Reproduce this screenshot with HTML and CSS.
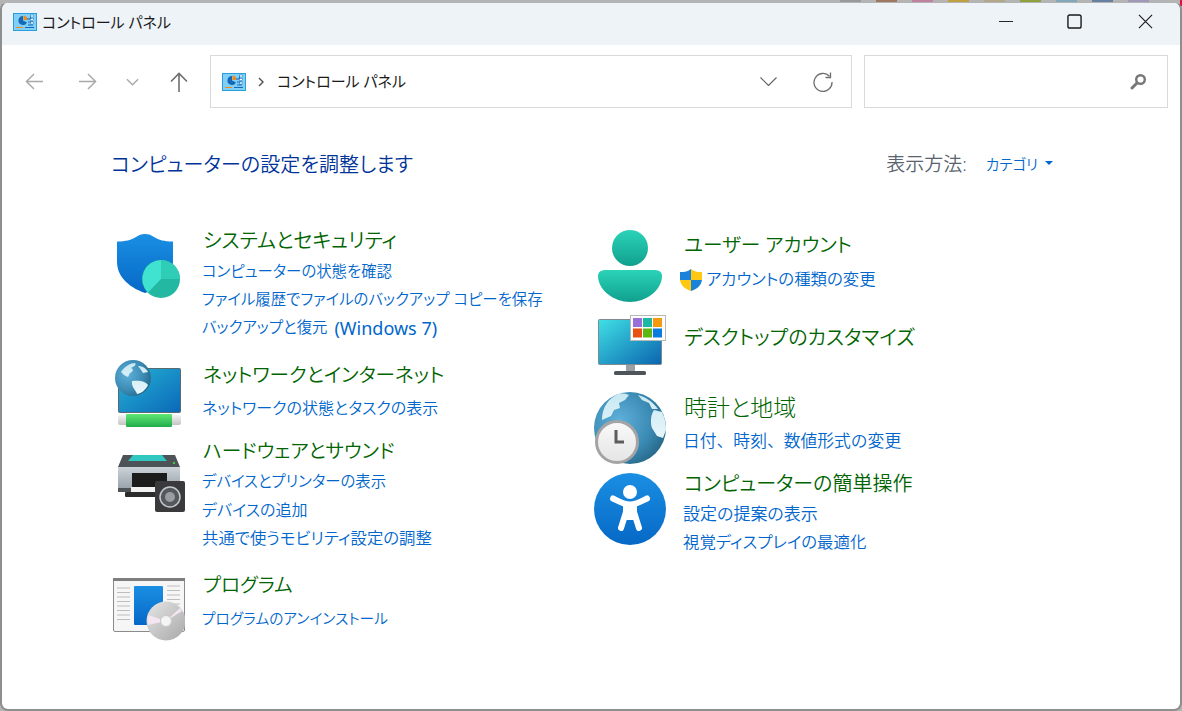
FILE: index.html
```html
<!DOCTYPE html>
<html lang="ja">
<head>
<meta charset="utf-8">
<title>コントロール パネル</title>
<link rel="stylesheet" href="styles.css">
</head>
<body>
<svg class="defs" width="0" height="0" aria-hidden="true">
  <defs>
    <linearGradient id="blue" x1="0" y1="0" x2="0" y2="1"><stop offset="0" stop-color="#1a8fe3"/><stop offset="1" stop-color="#0668c6"/></linearGradient>
    <linearGradient id="teal" x1="0" y1="0" x2="0" y2="1"><stop offset="0" stop-color="#2bd3b8"/><stop offset="1" stop-color="#10a08e"/></linearGradient>
    <linearGradient id="screen" x1="0" y1="0" x2="1" y2="1"><stop offset="0" stop-color="#3fe0e4"/><stop offset="1" stop-color="#0b64b0"/></linearGradient>
    <linearGradient id="screen2" x1="0" y1="0" x2="1" y2="1"><stop offset="0" stop-color="#26b4d4"/><stop offset="1" stop-color="#0a68b8"/></linearGradient>
    <radialGradient id="globe" cx="0.35" cy="0.4" r="0.75"><stop offset="0" stop-color="#5fb0da"/><stop offset="0.6" stop-color="#3a8ab4"/><stop offset="1" stop-color="#235f7e"/></radialGradient>
    <linearGradient id="land" x1="0" y1="0" x2="0" y2="1"><stop offset="0" stop-color="#c8e8f2"/><stop offset="1" stop-color="#e8f6fb"/></linearGradient>
    <linearGradient id="pipe" x1="0" y1="0" x2="0" y2="1"><stop offset="0" stop-color="#5fe873"/><stop offset="1" stop-color="#22ac4c"/></linearGradient>
    <linearGradient id="cap" x1="0" y1="0" x2="0" y2="1"><stop offset="0" stop-color="#f4f4f4"/><stop offset="1" stop-color="#c4c4c4"/></linearGradient>
    <linearGradient id="body" x1="0" y1="0" x2="0" y2="1"><stop offset="0" stop-color="#ccd3d9"/><stop offset="1" stop-color="#98a2aa"/></linearGradient>
    <linearGradient id="cd" x1="0" y1="0" x2="1" y2="1"><stop offset="0" stop-color="#e6e6e6"/><stop offset="1" stop-color="#a8a8a8"/></linearGradient>
    <linearGradient id="face" x1="0" y1="0" x2="0" y2="1"><stop offset="0" stop-color="#fafafa"/><stop offset="1" stop-color="#e4e4e4"/></linearGradient>
    <g id="cp">
      <rect x="0.5" y="0.5" width="23" height="17" fill="#7fd0f4" stroke="#2a9ce0"/>
      <path d="M10 3a4.5 4.5 0 1 0 4 6.500l-4-2z" fill="#1668b8"/>
      <path d="M10.500 2.500a4.500 4.500 0 0 1 4 4.500h-4z" fill="#f08a1c"/>
      <path d="M14 6h3l1-3h2M15 9h5M15 12h5" stroke="#1668b8" fill="none"/>
      <rect x="17.500" y="2" width="3" height="2" fill="#fff" stroke="#1668b8" stroke-width=".5"/>
      <rect x="17.500" y="5.500" width="3" height="2" fill="#fff" stroke="#1668b8" stroke-width=".5"/>
      <rect x="17.500" y="9" width="3" height="2" fill="#fff" stroke="#1668b8" stroke-width=".5"/>
      <path d="M3 14.500h7" stroke="#f08a1c" stroke-width="1"/><path d="M12 14.500h9" stroke="#1668b8" stroke-width="1"/>
    </g>
  </defs>
</svg>
<div class="backdrop">
  <span class="swatch swatch-a"></span><span class="swatch swatch-b"></span><span class="swatch swatch-c"></span><span class="swatch swatch-d"></span><span class="swatch swatch-e"></span><span class="swatch swatch-f"></span><span class="swatch swatch-g"></span><span class="swatch swatch-h"></span><span class="swatch swatch-i"></span>
</div>
<div class="window">
  <header class="titlebar">
    <svg class="app-icon" viewBox="0 0 24 18"><use href="#cp"/></svg>
    <span class="title">コントロール パネル</span>
    <div class="caption">
      <svg class="cap" viewBox="0 0 16 16"><path d="M0 8h15" stroke="#1a1a1a" fill="none"/></svg>
      <svg class="cap" viewBox="0 0 16 16"><rect x="1" y="1" width="14" height="14" rx="2" stroke="#1a1a1a" stroke-width="1.500" fill="none"/></svg>
      <svg class="cap" viewBox="0 0 16 16"><path d="M1 1l14 14M15 1L1 15" stroke="#1a1a1a" stroke-width="1.200" fill="none"/></svg>
    </div>
  </header>
  <nav class="toolbar">
    <svg class="nav nav-back" viewBox="0 0 20 20"><path d="M19 10H1.500M9.500 2l-8 8 8 8" stroke="#a8a8a8" stroke-width="1.500" fill="none"/></svg>
    <svg class="nav nav-fwd" viewBox="0 0 20 20"><path d="M1 10h17.500M10.500 2l8 8-8 8" stroke="#a8a8a8" stroke-width="1.500" fill="none"/></svg>
    <svg class="nav nav-down" viewBox="0 0 14 8"><path d="M1 1l6 6 6-6" stroke="#a8a8a8" stroke-width="1.500" fill="none"/></svg>
    <svg class="nav nav-up" viewBox="0 0 20 20"><path d="M10 20V1.500M2 9.500l8-8 8 8" stroke="#6e6e6e" stroke-width="1.600" fill="none"/></svg>
    <div class="address">
      <svg class="app-icon" viewBox="0 0 24 18"><use href="#cp"/></svg>
      <svg class="crumb-sep" viewBox="0 0 6 10"><path d="M1 1l4 4-4 4" stroke="#555" stroke-width="1.500" fill="none"/></svg>
      <span class="crumb">コントロール パネル</span>
      <svg class="addr-down" viewBox="0 0 17 9"><path d="M.5.500l8 8 8-8" stroke="#666" stroke-width="1.200" fill="none"/></svg>
      <svg class="addr-refresh" viewBox="0 0 20 20"><path d="M16.500 4.200A9 9 0 1 0 19 10" stroke="#6e6e6e" stroke-width="1.300" fill="none"/><path d="M17.500 .5v5h-5" stroke="#6e6e6e" stroke-width="1.300" fill="none"/></svg>
    </div>
    <div class="search">
      <svg class="search-icon" viewBox="0 0 17 17"><circle cx="10.500" cy="6.500" r="4.300" stroke="#777" stroke-width="2.400" fill="none"/><path d="M7 10l-5 5" stroke="#777" stroke-width="3" stroke-linecap="round"/></svg>
    </div>
  </nav>
  <main class="content">
    <div class="content-head">
      <h1 class="page-title">コンピューターの設定を調整します</h1>
      <div class="view">
        <span class="view-label">表示方法:</span>
        <a class="view-value">カテゴリ</a>
        <span class="view-caret"></span>
      </div>
    </div>
    <div class="columns">
      <section class="col col-left">
        <article class="cat">
          <svg class="cat-icon icon-system" viewBox="0 0 72 72">
            <path d="M4 12.500c9 0 14-1.500 19-4.500 3-2 5-3 9-3s6 1 9 3c5 3 10 4.500 19 4.500v20c0 14-10 25-28 31.500C14 57.500 4 46.500 4 32.500z" fill="url(#blue)"/>
            <circle cx="48" cy="50" r="19" fill="#23b8a2"/>
            <path d="M48 50V31a19 19 0 0 1 19 19z" fill="#2fcdb6"/>
            <path d="M48 50V31a19 19 0 0 0-13 32.500z" fill="#3fe3cf"/>
          </svg>
          <div class="cat-body">
            <h2 class="cat-title">システムとセキュリティ</h2>
            <ul class="links">
              <li>コンピューターの状態を確認</li>
              <li>ファイル履歴でファイルのバックアップ コピーを保存</li>
              <li>バックアップと復元<span class="latin">(Windows 7)</span></li>
            </ul>
          </div>
        </article>
        <article class="cat cat-single">
          <svg class="cat-icon icon-network" viewBox="0 0 72 72">
            <rect x="5.500" y="10.500" width="62" height="44" rx="1" fill="url(#screen2)" stroke="#5a6870"/>
            <rect x="5" y="57" width="63" height="10" rx="2" fill="url(#cap)"/>
            <rect x="13" y="56" width="46" height="13" rx="1" fill="url(#pipe)"/>
            <circle cx="20" cy="20" r="18" fill="url(#globe)"/>
            <path d="M8 14c4-6 10-9 14-9 2 2-2 4-4 5 3 1 2 4-1 5l-2 4-4-2zM19 23c6-1 14 0 16 4-2 5-8 9-11 9-1-4-6-7-5-13zM25 8c4 0 8 2 10 6l-5 1-2-3z" fill="url(#land)"/>
          </svg>
          <div class="cat-body">
            <h2 class="cat-title cat-title-narrow">ネットワークとインターネット</h2>
            <ul class="links">
              <li class="link-m">ネットワークの状態とタスクの表示</li>
            </ul>
          </div>
        </article>
        <article class="cat">
          <svg class="cat-icon icon-hardware" viewBox="0 0 72 72">
            <path d="M5 20l5-12h52l5 12z" fill="#4e5358"/>
            <path d="M20 8h29l5 6H15z" fill="#2fc7c0"/>
            <path d="M5 20h62v22H5z" fill="url(#body)"/>
            <rect x="5" y="41" width="13" height="4" fill="#4e5358"/>
            <rect x="19" y="26" width="35" height="14" fill="#1c1c1c"/>
            <path d="M18 40h38v5H18z" fill="#f2f2f2"/>
            <rect x="12" y="45" width="43" height="5" rx="1" fill="#2c2c2c"/>
            <rect x="60" y="15" width="2" height="2" fill="#3fd03f"/>
            <rect x="42" y="34" width="30" height="31" rx="2" fill="#3a3a3c"/>
            <circle cx="57" cy="50" r="10" fill="#55585c" stroke="#c4c8cc" stroke-width="1.500"/>
            <circle cx="57" cy="50" r="5" fill="#9a9ea2"/>
          </svg>
          <div class="cat-body">
            <h2 class="cat-title cat-title-narrow">ハードウェアとサウンド</h2>
            <ul class="links">
              <li>デバイスとプリンターの表示</li>
              <li class="link-m">デバイスの追加</li>
              <li class="link-l">共通で使うモビリティ設定の調整</li>
            </ul>
          </div>
        </article>
        <article class="cat cat-single">
          <svg class="cat-icon icon-program" viewBox="0 0 72 72">
            <rect x=".5" y="4.500" width="71" height="53" rx="1.500" fill="#f6f6f6" stroke="#8a8a8a"/>
            <rect x="0" y="4" width="72" height="3" fill="#7e7e7e"/>
            <rect x="21" y="12" width="29" height="39" rx="1" fill="url(#blue)"/>
            <path d="M4 14h13M4 18.500h13M4 23h13M4 27.500h13M4 32h13M4 36.500h13M4 41h13M4 45.500h13M54 12h13M54 16.500h13M54 21h13M54 25.500h13M54 30h13M54 34.500h13" stroke="#bdbdbd" fill="none"/>
            <circle cx="53" cy="47" r="19.500" fill="url(#cd)"/>
            <path d="M53 47l-18-6a19 19 0 0 0 0 10zM53 47l14-13a19 19 0 0 1 2 3z" fill="#f4e6f0"/>
            <circle cx="53" cy="47" r="5.500" fill="#f4f4f4" stroke="#c8c8c8"/>
          </svg>
          <div class="cat-body">
            <h2 class="cat-title cat-title-narrow">プログラム</h2>
            <ul class="links">
              <li class="link-s">プログラムのアンインストール</li>
            </ul>
          </div>
        </article>
      </section>
      <section class="col col-right">
        <article class="cat cat-single">
          <svg class="cat-icon icon-user" viewBox="0 0 72 72">
            <circle cx="36" cy="18" r="18" fill="url(#teal)"/>
            <path d="M12 40h48c5 0 8 2 8 6 0 14-16 26-32 26S4 60 4 46c0-4 3-6 8-6z" fill="url(#teal)"/>
          </svg>
          <div class="cat-body">
            <h2 class="cat-title cat-title-narrow">ユーザー アカウント</h2>
            <ul class="links links-shield">
              <li class="link-l">
                <svg class="shield" viewBox="0 0 22 22"><path d="M11 0c3 2.500 6 3 11 3v8H11z" fill="#ffc812"/><path d="M11 0C8 2.500 5 3 0 3v8h11z" fill="#1a82d8"/><path d="M0 11h11v11C5 20 1 17 0 11z" fill="#ffc812"/><path d="M11 11h11c-1 6-5 9-11 11z" fill="#1a82d8"/></svg>アカウントの種類の変更
              </li>
            </ul>
          </div>
        </article>
        <article class="cat">
          <svg class="cat-icon icon-desktop" viewBox="0 0 72 72">
            <rect x="4.500" y="9.500" width="63" height="45" rx="1" fill="url(#screen)" stroke="#7e8a92"/>
            <rect x="32" y="55" width="9" height="6" fill="#9aa0a4"/>
            <rect x="20" y="61" width="32" height="4" rx="1.500" fill="#4d555b"/>
            <rect x="36.500" y="5.500" width="35" height="25" fill="#fff" stroke="#b8b8b8"/>
            <rect x="39" y="8" width="9" height="9" fill="#9a70d8"/>
            <rect x="49" y="8" width="9" height="9" fill="#1cb8a6"/>
            <rect x="59" y="8" width="9" height="9" fill="#f59a10"/>
            <rect x="39" y="18.500" width="9" height="9" fill="#e85014"/>
            <rect x="49" y="18.500" width="9" height="9" fill="#5cb810"/>
            <rect x="59" y="18.500" width="9" height="9" fill="#0a7ce0"/>
          </svg>
          <div class="cat-body">
            <h2 class="cat-title">デスクトップのカスタマイズ</h2>
          </div>
        </article>
        <article class="cat cat-single">
          <svg class="cat-icon icon-clock" viewBox="0 0 72 72">
            <circle cx="36" cy="36" r="36" fill="url(#globe)"/>
            <path d="M24 2c5-1 9 0 11 1l-4 5-6 3 1 5-6 2-3 6-9 4C8 15 15 6 24 2zM44 3c8 2 15 7 20 14l-6 0-3-6-7-3zM60 18l8 2c3 6 4 12 4 18l-3 8-6-2-5-8c-2-6-1-14 2-18z" fill="url(#land)"/>
            <circle cx="23" cy="50" r="20.500" fill="url(#face)" stroke="#a4a4a4" stroke-width="3"/>
            <path d="M22 38v12h8" stroke="#5c5c5c" stroke-width="3" fill="none"/>
          </svg>
          <div class="cat-body">
            <h2 class="cat-title cat-title-wide">時計と地域</h2>
            <ul class="links">
              <li class="link-full">日付、時刻、数値形式の変更</li>
            </ul>
          </div>
        </article>
        <article class="cat">
          <svg class="cat-icon icon-access" viewBox="0 0 72 72">
            <circle cx="36" cy="36" r="36" fill="url(#blue)"/>
            <circle cx="36" cy="19" r="7" fill="#fff"/>
            <path d="M19 25.500c6 3 11 6 17 6s11-3 17-6" stroke="#fff" stroke-width="6" stroke-linecap="round" fill="none"/>
            <path d="M33 36l-6 19M39 36l6 19" stroke="#fff" stroke-width="6" stroke-linecap="round" fill="none"/>
            <path d="M29 31h14v11l-3 5h-8l-3-5z" fill="#fff"/>
          </svg>
          <div class="cat-body">
            <h2 class="cat-title">コンピューターの簡単操作</h2>
            <ul class="links">
              <li class="link-xl">設定の提案の表示</li>
              <li class="link-l">視覚ディスプレイの最適化</li>
            </ul>
          </div>
        </article>
      </section>
    </div>
  </main>
</div>
</body>
</html>
```

FILE: styles.css
```css
* { box-sizing: border-box; }
html, body { margin: 0; height: 100%; }
body {
  background: linear-gradient(#e0103c, #e0103c) no-repeat right top / 2px 6px, #b4b4b4;
  font-family: "Noto Sans", "Noto Sans CJK JP", sans-serif;
  font-feature-settings: "palt";
  font-weight: 350;
  overflow: hidden;
  color: #1a1a1a;
}
.defs { display: block; height: 0; }
.backdrop {
  height: 2px;
  display: flex;
  gap: 15px;
  padding-left: 840px;
}
.swatch { width: 21px; height: 2px; }
.swatch-a { background: #999999; }
.swatch-b { background: #a07860; }
.swatch-c { background: #c080a0; }
.swatch-d { background: #c0a040; }
.swatch-e { background: #b0a888; }
.swatch-f { background: #90a040; }
.swatch-g { background: #80a8b8; }
.swatch-h { background: #6880a0; }
.swatch-i { background: #a098b8; }
.window {
  height: 709px;
  background: #fff;
  border: 2px solid #8e8e8e;
  border-top: 1px solid #b4b4b4;
  border-radius: 8px;
  overflow: hidden;
}
.titlebar {
  height: 42px;
  background: #eef3f8;
  display: flex;
  align-items: center;
  padding: 0 0 5px 11px;
}
.app-icon { width: 24px; height: 18px; flex: none; }
.title { font-size: 15px; font-weight: 400; margin-left: 5px; color: #1a1a1a; }
.caption { margin-left: auto; display: flex; }
.cap { width: 15px; height: 15px; margin: 0 28px 0 28px; }
.cap:last-child { margin: 0 27px 0 28px; }
.cap:first-child { margin: 0 25px 0 28px; }
.toolbar {
  height: 73px;
  display: flex;
  align-items: center;
  padding: 0 12px 0 0;
}
.nav { flex: none; }
.nav-back { width: 19px; height: 19px; margin-left: 23px; }
.nav-fwd { width: 19px; height: 19px; margin-left: 34px; }
.nav-down { width: 13px; height: 8px; margin-left: 29px; }
.nav-up { width: 20px; height: 20px; margin-left: 30px; }
.address {
  flex: none;
  width: 642px;
  height: 53px;
  margin-left: 21px;
  border: 1px solid #d9d9d9;
  display: flex;
  align-items: center;
  padding-left: 11px;
}
.crumb-sep { width: 6px; height: 10px; margin-left: 12px; }
.crumb { font-size: 15px; font-weight: 400; margin-left: 13px; color: #1a1a1a; margin-top: -2px; }
.addr-down { width: 17px; height: 9px; margin-left: auto; }
.addr-refresh { width: 20px; height: 20px; margin: 0 18px 0 36px; }
.search {
  flex: none;
  width: 304px;
  height: 53px;
  margin-left: 12px;
  border: 1px solid #d9d9d9;
  display: flex;
  align-items: center;
  justify-content: flex-end;
  padding-right: 20px;
}
.search-icon { width: 17px; height: 17px; }
.content { padding: 0 0 0 109px; }
.content-head {
  display: flex;
  align-items: center;
  justify-content: space-between;
  width: 942px;
  height: 32px;
  margin-top: 29px;
}
.page-title { margin: 0; font-size: 20px; font-weight: 350; color: #003399; letter-spacing: .1px; white-space: nowrap; }
.view { display: flex; align-items: center; }
.view-label { font-size: 19px; color: #5a6470; }
.view-value { font-size: 14.500px; color: #0066cc; margin-left: 19px; }
.view-caret {
  width: 0;
  height: 0;
  margin-left: 7px;
  border: 4px solid transparent;
  border-top-color: #0066cc;
  border-bottom-width: 0;
}
.columns { display: flex; margin-left: 2px; }
.col { display: grid; flex: none; }
.col-left { width: 481px; grid-template-rows: 134px 76px 134px auto; margin-top: 47px; }
.col-right { grid-template-rows: 93px 69px 77px auto; margin-top: 51px; }
.cat { display: flex; align-items: flex-start; }
.cat-icon { width: 72px; height: 72px; flex: none; margin-right: 17px; }
.cat-body { min-width: 0; }
.cat-title {
  margin: 0;
  font-size: 20px;
  line-height: 30px;
  font-weight: 350;
  color: #006400;
  white-space: nowrap;
  padding-left: 1px;
}
.cat-title-narrow { font-size: 19.600px; }
.cat-title-wide { font-size: 23px; font-weight: 300; }
.links { list-style: none; margin: 1px 0 0; padding: 0; }
.col-left .links { margin-top: 2px; }
.cat-single .links, .col-left .cat-single .links { margin-top: 4px; }
.col-right .cat-single .links { margin-top: 5px; }
.links li {
  font-size: 15.400px;
  line-height: 28px;
  color: #0066cc;
  white-space: nowrap;
  display: flex;
  align-items: center;
}
.links .link-s { font-size: 14.700px; }
.links .link-m { font-size: 16px; }
.links .link-l { font-size: 16.400px; }
.links .link-xl { font-size: 17px; }
.links .link-full { font-size: 16.800px; font-feature-settings: normal; }
.latin { font-size: 18px; font-weight: 400; margin-left: 7px; }
.shield { width: 22px; height: 22px; margin-left: -3px; margin-right: 4px; margin-top: 2px; }
.icon-system { margin-top: 3px; }
.icon-network { margin-top: -2px; }
.icon-hardware { margin-top: 11px; }
.icon-program { margin-top: 4px; }
.icon-desktop { margin-top: -13px; }
.icon-access { margin-top: 4px; }
```
